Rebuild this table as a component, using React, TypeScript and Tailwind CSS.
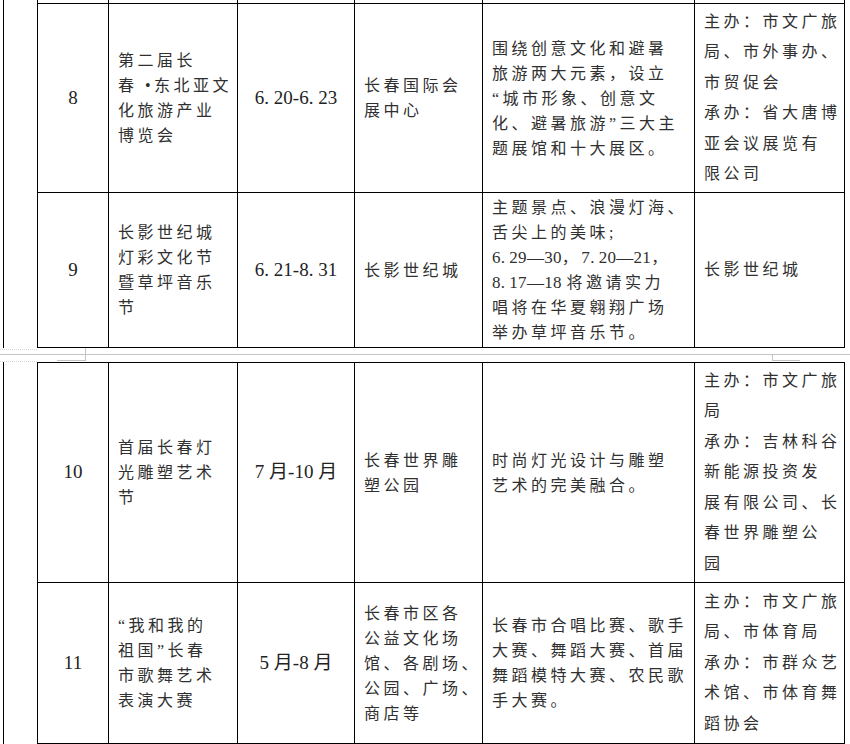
import type { ReactNode } from "react";

const grid = "grid grid-cols-[71px_129px_117px_128px_212px_150px]";
const cell = "border-r border-b border-black flex items-center overflow-hidden";

function Dot() {
  return <span className="inline-block w-[0.5em]">.</span>;
}

function N({ children }: { children: ReactNode }) {
  return <span className="text-[17px] tracking-[0.3px]">{children}</span>;
}

function Lines({ lines, wide }: { lines: ReactNode[]; wide?: boolean }) {
  return (
    <div
      className={`pl-[9px] text-[16px] tracking-[3.5px] text-[#303030] ${
        wide ? "leading-[30.5px] pl-[8px]" : "leading-[25px]"
      }`}
    >
      {lines.map((l, i) => (
        <div key={i} className="whitespace-nowrap">
          {l}
        </div>
      ))}
    </div>
  );
}

type RowData = {
  no: string;
  name: ReactNode[];
  date: ReactNode;
  place: ReactNode[];
  content: ReactNode[];
  org: ReactNode[];
};

function Row({ r, h }: { r: RowData; h: string }) {
  return (
    <div className={`${grid} ${h}`}>
      <div className={`${cell} justify-center text-[19px] text-[#222]`}>{r.no}</div>
      <div className={cell}>
        <Lines lines={r.name} />
      </div>
      <div className={`${cell} justify-center text-[19px] text-[#222] whitespace-nowrap`}>
        {r.date}
      </div>
      <div className={cell}>
        <Lines lines={r.place} />
      </div>
      <div className={cell}>
        <Lines lines={r.content} />
      </div>
      <div className={cell}>
        <Lines lines={r.org} wide />
      </div>
    </div>
  );
}

function EmptyRow({ h, bottom }: { h: string; bottom?: boolean }) {
  const c = bottom ? "border-r border-b border-black" : "border-r border-black";
  return (
    <div className={`${grid} ${h}`}>
      {[0, 1, 2, 3, 4, 5].map((i) => (
        <div key={i} className={c} />
      ))}
    </div>
  );
}

const row8: RowData = {
  no: "8",
  name: ["第二届长", "春 •东北亚文", "化旅游产业", "博览会"],
  date: (
    <span>
      6<Dot />20-6<Dot />23
    </span>
  ),
  place: ["长春国际会", "展中心"],
  content: [
    "围绕创意文化和避暑",
    "旅游两大元素，设立",
    "“城市形象、创意文",
    "化、避暑旅游”三大主",
    "题展馆和十大展区。",
  ],
  org: ["主办：市文广旅", "局、市外事办、", "市贸促会", "承办：省大唐博", "亚会议展览有", "限公司"],
};

const row9: RowData = {
  no: "9",
  name: ["长影世纪城", "灯彩文化节", "暨草坪音乐", "节"],
  date: (
    <span>
      6<Dot />21-8<Dot />31
    </span>
  ),
  place: ["长影世纪城"],
  content: [
    "主题景点、浪漫灯海、",
    "舌尖上的美味;",
    <>
      <N>
        6<Dot />29—30
      </N>
      ，
      <N>
        7<Dot />20—21
      </N>
      ，
    </>,
    <>
      <N>
        8<Dot />17—18{" "}
      </N>
      将邀请实力
    </>,
    "唱将在华夏翱翔广场",
    "举办草坪音乐节。",
  ],
  org: ["长影世纪城"],
};

const row10: RowData = {
  no: "10",
  name: ["首届长春灯", "光雕塑艺术", "节"],
  date: <span>7&nbsp;月-10&nbsp;月</span>,
  place: ["长春世界雕", "塑公园"],
  content: ["时尚灯光设计与雕塑", "艺术的完美融合。"],
  org: ["主办：市文广旅", "局", "承办：吉林科谷", "新能源投资发", "展有限公司、长", "春世界雕塑公", "园"],
};

const row11: RowData = {
  no: "11",
  name: ["“我和我的", "祖国”长春", "市歌舞艺术", "表演大赛"],
  date: <span>5&nbsp;月-8&nbsp;月</span>,
  place: ["长春市区各", "公益文化场", "馆、各剧场、", "公园、广场、", "商店等"],
  content: ["长春市合唱比赛、歌手", "大赛、舞蹈大赛、首届", "舞蹈模特大赛、农民歌", "手大赛。"],
  org: ["主办：市文广旅", "局、市体育局", "承办：市群众艺", "术馆、市体育舞", "蹈协会"],
};

function Section({ children }: { children: ReactNode }) {
  return (
    <div className="flex">
      <div className="w-[3px]" />
      <div className="w-px bg-black" />
      <div className="w-[33px]" />
      <div className="flex flex-col border-l border-black">{children}</div>
    </div>
  );
}

export default function App() {
  return (
    <div className="w-[850px] h-[744px] overflow-hidden bg-white font-['Liberation_Serif','Noto_Sans_CJK_SC',serif]">
      <Section>
        <EmptyRow h="h-[4px]" bottom />
        <Row r={row8} h="h-[189px]" />
        <Row r={row9} h="h-[155px]" />
      </Section>

      {/* page break */}
      <div className="relative h-[14px] flex flex-col">
        <div className="h-[6px]" />
        <div className="h-px bg-[#c4c4c4]" />
        <div className="absolute left-0 top-[1px] w-[37px] border-t border-dotted border-[#d8d8d8]" />
        <div className="absolute left-0 top-[13px] w-[37px] border-t border-dotted border-[#d8d8d8]" />
        <div className="absolute left-[57px] top-0 w-[29px] h-[13px] border-r border-b border-[#c4c4c4]" />
        <div className="absolute left-[772px] top-[7px] w-[28px] h-[6px] border-l border-b border-[#c4c4c4]" />
      </div>

      <Section>
        <div className="border-t border-black" />
        <Row r={row10} h="h-[220px]" />
        <Row r={row11} h="h-[161px]" />
        <EmptyRow h="h-[20px]" />
      </Section>
    </div>
  );
}
